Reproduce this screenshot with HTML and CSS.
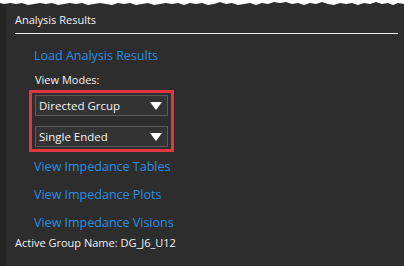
FILE: index.html
```html
<!DOCTYPE html>
<html lang="en">
<head>
    <meta charset="UTF-8">
    <title>Analysis Results</title>
    <link rel="stylesheet" href="styles.css">
</head>
<body>
    <div class="torn">
        <svg viewBox="0 0 404 8" preserveAspectRatio="none" width="404" height="8">
            <polygon fill="#ffffff" points="0,0 404,0 404,4 398,3 393,5 388,3 382,4 376,2 370,4 364,3 358,5 352,3 346,4 340,3 334,5 328,4 322,2 316,4 310,3 304,5 298,3 292,4 286,2 280,3 274,2 268,4 262,3 256,5 250,3 244,4 238,5 232,3 226,4 220,2 214,4 208,5 202,3 196,4 190,3 184,5 178,3 172,4 166,3 160,4 154,5 148,3 142,4 136,5 130,3 124,4 118,3 112,5 106,4 100,3 94,4 88,5 82,3 76,4 70,3 64,4 58,5 52,3 46,4 40,3 34,4 28,5 22,3 16,4 10,3 4,4 0,3"/>
        </svg>
    </div>
    <div class="panel">
        <div class="edge"></div>
        <div class="content">
            <h1 class="title">Analysis Results</h1>
            <div class="rule"></div>
            <div class="body">
                <a class="link first">Load Analysis Results</a>
                <div class="label">View Modes:</div>
                <div class="modes">
                    <div class="select">
                        <span>Directed Grcup</span>
                        <span class="arrow"></span>
                    </div>
                    <div class="select">
                        <span>Single Ended</span>
                        <span class="arrow"></span>
                    </div>
                </div>
                <a class="link after">View Impedance Tables</a>
                <a class="link">View Impedance Plots</a>
                <a class="link">View Impedance Visions</a>
            </div>
            <div class="active">Active Group Name: DG_J6_U12</div>
        </div>
    </div>
</body>
</html>
```

FILE: styles.css
```css
html, body {
    margin: 0;
    padding: 0;
}
body {
    width: 404px;
    height: 266px;
    overflow: hidden;
    background-color: #2d2d2d;
    font-family: "Open Sans", "Noto Sans", sans-serif;
    color: #f2f2f2;
    position: relative;
}
.torn {
    height: 0;
}
.torn svg {
    display: block;
    position: absolute;
    top: 0;
    left: 0;
    z-index: 2;
}
.panel {
    display: flex;
    height: 266px;
}
.edge {
    width: 6px;
    background-color: #252525;
}
.content {
    flex: 1;
    padding-left: 9px;
    padding-right: 6px;
}
.title {
    margin: 0;
    padding-top: 12px;
    font-size: 11px;
    font-weight: normal;
    line-height: 16px;
}
.rule {
    margin-top: 5px;
    height: 1px;
    background-color: #f0f0f0;
}
.body {
    padding-left: 19px;
    display: flex;
    flex-direction: column;
}
.link {
    color: #2c8de0;
    font-size: 12.5px;
    line-height: 18px;
    cursor: pointer;
    margin-top: 10px;
}
.link.first {
    margin-top: 13px;
}
.link.after {
    margin-top: 6px;
}
.label {
    font-size: 11px;
    line-height: 16px;
    margin-top: 7px;
    margin-left: 1px;
}
.modes {
    width: 133px;
    margin-top: 2px;
    margin-left: -5px;
    border: 3px solid #e0383e;
    padding: 2px 3px;
    display: flex;
    flex-direction: column;
    gap: 10px;
}
.select {
    height: 19px;
    background-color: #333333;
    border: 1px solid #5a5a5a;
    display: flex;
    align-items: center;
    justify-content: space-between;
    padding: 0 5px 0 3px;
    font-size: 11.5px;
}
.arrow {
    width: 0;
    height: 0;
    border-left: 6px solid transparent;
    border-right: 6px solid transparent;
    border-top: 8px solid #ffffff;
}
.active {
    font-size: 11px;
    line-height: 16px;
    margin-top: 3px;
}
```
